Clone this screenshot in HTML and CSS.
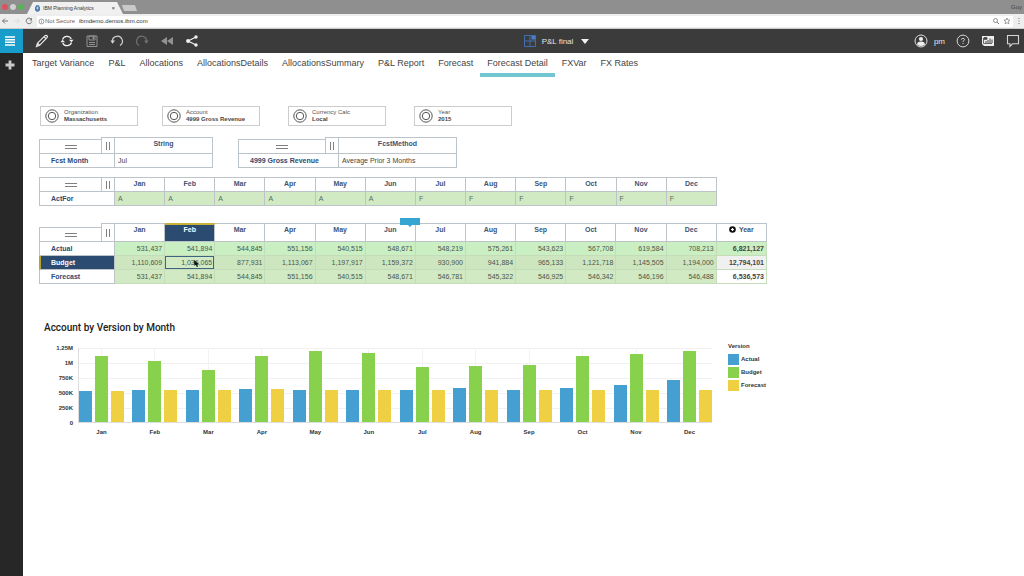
FILE: index.html
```html
<!DOCTYPE html>
<html lang="en">
<head>
<meta charset="utf-8">
<title>IBM Planning Analytics</title>
<link rel="stylesheet" href="styles.css">
</head>
<body>
<header class="browser">
  <div class="tabstrip">
    <span class="light red"></span><span class="light grey"></span><span class="light green"></span>
    <div class="browser-tab">
      <svg class="favicon" viewBox="0 0 6 8"><path d="M1 0h4v2h1v4L4 8H2L0 6V2h1z" fill="#4c7fb0"/><path d="M2 2h2v3H2z" fill="#b9d2e8"/></svg>
      <span>IBM Planning Analytics</span>
      <button class="tab-close" aria-label="Close tab">×</button>
    </div>
    <span class="new-tab"></span>
    <span class="profile">Guy</span>
  </div>
  <div class="address-bar">
    <svg class="nav-icon" viewBox="0 0 8 8"><path d="M7 4H1.500M4 1.500L1.500 4 4 6.500" fill="none" stroke="#777"/></svg>
    <svg class="nav-icon" viewBox="0 0 8 8"><path d="M1 4h5.500M4 1.500L6.500 4 4 6.500" fill="none" stroke="#ddd"/></svg>
    <svg class="nav-icon" viewBox="0 0 8 8"><path d="M6.400 2.400A2.800 2.800 0 1 0 6.800 4.500" fill="none" stroke="#777"/><path d="M7 .8v2.700H4.300z" fill="#777"/></svg>
    <div class="location">
      <svg class="info" viewBox="0 0 8 8"><circle cx="4" cy="4" r="2.800" fill="none" stroke="#777" stroke-width=".8"/><path d="M4 3.600v2M4 2.200v.8" stroke="#777" stroke-width=".8"/></svg>
      <label for="url">Not Secure</label>
      <input id="url" type="text" value="ibmdemo.demos.ibm.com">
      <svg class="nav-icon" viewBox="0 0 8 8"><circle cx="3.500" cy="3.500" r="2" fill="none" stroke="#777" stroke-width=".8"/><path d="M5 5l2 2" stroke="#777"/></svg>
      <svg class="nav-icon" viewBox="0 0 8 8"><path d="M4 1l.9 2 2.100.2-1.600 1.400.5 2.200L4 5.700 2.100 6.800l.5-2.200L1 3.200 3.100 3z" fill="none" stroke="#777" stroke-width=".7"/></svg>
    </div>
    <svg class="more" viewBox="0 0 4 8"><path d="M2 1v1M2 3.500v1M2 6v1" stroke="#777"/></svg>
  </div>
</header>

<div class="toolbar">
  <button class="menu" aria-label="Menu"><svg width="10" height="10" viewBox="0 0 10 10"><path d="M0 1h10M0 3.700h10M0 6.300h10M0 9h10" stroke="#fff" stroke-width="1.600"/></svg></button>
  <div class="tools">
    <button aria-label="Edit"><svg viewBox="0 0 14 14"><path d="M1.500 12.500l1-3.300L10 1.700q1.200-.8 2 0 .8.900 0 2L4.600 11.300zM2.500 9.200l2.100 2.100M9 2.700l2.200 2.200" fill="none" stroke="#f2f2f2" stroke-width="1.200"/></svg></button>
    <button aria-label="Refresh"><svg viewBox="0 0 14 14"><path d="M2.500 5.500a4.800 4.800 0 0 1 8.800-.6M11.500 8.500a4.800 4.800 0 0 1-8.800.6" fill="none" stroke="#f2f2f2" stroke-width="1.300"/><path d="M8.800 5.800h4.700L11.600 8.300zM5.200 8.200H.5L2.400 5.700z" fill="#f2f2f2"/></svg></button>
    <button aria-label="Save"><svg viewBox="0 0 14 14"><path d="M2 2h10v10.500H2z" fill="none" stroke="#929292"/><path d="M4 2h6v4H4zM4 8.500h6M4 10.500h6" fill="none" stroke="#929292"/><path d="M7.500 2.500H9v2.700H7.500z" fill="#929292"/></svg></button>
    <button aria-label="Undo"><svg viewBox="0 0 14 14"><path d="M2.400 7.500A5 5 0 1 1 10 11.500" fill="none" stroke="#d0d0d0" stroke-width="1.200"/><path d="M.4 6.500h4.700L2.500 9.800z" fill="#d0d0d0"/></svg></button>
    <button aria-label="Redo"><svg viewBox="0 0 14 14"><path d="M11.600 7.500A5 5 0 1 0 4 11.500" fill="none" stroke="#707070" stroke-width="1.200"/><path d="M13.600 6.500H8.900l2.600 3.300z" fill="#707070"/></svg></button>
    <button aria-label="Rewind"><svg viewBox="0 0 14 14"><path d="M7 3v8L1 7zM13 3v8L7 7z" fill="#929292"/></svg></button>
    <button aria-label="Share"><svg viewBox="0 0 14 14"><path d="M11 3L3 7l8 4" fill="none" stroke="#f2f2f2" stroke-width="1.200"/><circle cx="11" cy="3" r="1.700" fill="#f2f2f2"/><circle cx="3" cy="7" r="1.900" fill="#f2f2f2"/><circle cx="11" cy="11" r="1.700" fill="#f2f2f2"/></svg></button>
  </div>
  <button class="book">
    <svg width="12" height="12" viewBox="0 0 12 12"><path d="M.5.5h11v11H.5zM6 .5v11M.5 6h11" fill="none" stroke="#416fae"/><path d="M7.500 1h3.500v3.500H7.500z" fill="#4b80c4"/></svg>
    <span>P&amp;L final</span>
    <svg width="8" height="5" viewBox="0 0 8 5"><path d="M0 0h8L4 5z" fill="#f2f2f2"/></svg>
  </button>
  <div class="account">
    <button class="user"><svg viewBox="0 0 14 14"><circle cx="7" cy="7" r="6" fill="none" stroke="#ddd"/><circle cx="7" cy="5" r="2.100" fill="#eee"/><path d="M3 10.500Q3.200 7.500 7 7.500t4 3Q9 12 7 12t-4-1.500z" fill="#eee"/></svg><span>pm</span></button>
    <button aria-label="Help"><svg viewBox="0 0 14 14"><circle cx="7" cy="7" r="5.900" fill="none" stroke="#d6d6d6"/><path d="M5.400 5.700Q5.500 4.300 7 4.300q1.600.1 1.500 1.400Q8.400 6.500 7 7.300v.7M7 9v1" fill="none" stroke="#d6d6d6" stroke-width=".9"/></svg></button>
    <button aria-label="Reports"><svg viewBox="0 0 14 14"><path d="M1 2h12v10H3L1 10z" fill="#ededed"/><path d="M2.500 4v5.500h8.500" fill="none" stroke="#444" stroke-width=".8"/><path d="M3 3.700h3v1.500H3zM5 9V7M7 9V6M9 9V4.500M11 9V5.500" fill="#444" stroke="#444"/></svg></button>
    <button aria-label="Comments"><svg viewBox="0 0 14 14"><path d="M1.500 1.500h11v8.300H6.500L4 12.300V9.800H1.500z" fill="none" stroke="#d6d6d6" stroke-width="1.100"/></svg></button>
  </div>
</div>

<div class="workspace">
  <aside class="sidebar"><button aria-label="Add"><svg width="10" height="10" viewBox="0 0 10 10"><path d="M5 .5v9M.5 5h9" stroke="#c9c9c9" stroke-width="2.800"/></svg></button></aside>
  <main>
    <nav class="sheets">
      <a href="#">Target Variance</a><a href="#">P&amp;L</a><a href="#">Allocations</a><a href="#">AllocationsDetails</a><a href="#">AllocationsSummary</a><a href="#">P&amp;L Report</a><a href="#">Forecast</a><a href="#" class="current">Forecast Detail</a><a href="#">FXVar</a><a href="#">FX Rates</a>
    </nav>

    <div class="selectors">
      <button><svg viewBox="0 0 14 14"><circle cx="7" cy="7" r="6.200"/><circle cx="7" cy="7" r="3.700"/></svg><span>Organization<b>Massachusetts</b></span></button>
      <button><svg viewBox="0 0 14 14"><circle cx="7" cy="7" r="6.200"/><circle cx="7" cy="7" r="3.700"/></svg><span>Account<b>4999 Gross Revenue</b></span></button>
      <button><svg viewBox="0 0 14 14"><circle cx="7" cy="7" r="6.200"/><circle cx="7" cy="7" r="3.700"/></svg><span>Currency Calc<b>Local</b></span></button>
      <button><svg viewBox="0 0 14 14"><circle cx="7" cy="7" r="6.200"/><circle cx="7" cy="7" r="3.700"/></svg><span>Year<b>2015</b></span></button>
    </div>

    <div class="inputs">
      <table class="grid month-input">
        <tr class="tall"><td class="corner"><div><i class="rows"></i><i class="cols"></i></div></td><th>String</th></tr>
        <tr><th class="row">Fcst Month</th><td>Jul</td></tr>
      </table>
      <table class="grid method-input">
        <tr class="tall"><td class="corner"><div><i class="rows"></i><i class="cols"></i></div></td><th>FcstMethod</th></tr>
        <tr><th class="row">4999 Gross Revenue</th><td>Average Prior 3 Months</td></tr>
      </table>
    </div>

    <table class="grid flags">
      <tr><td class="corner"><div><i class="rows"></i><i class="cols"></i></div></td><th>Jan</th><th>Feb</th><th>Mar</th><th>Apr</th><th>May</th><th>Jun</th><th>Jul</th><th>Aug</th><th>Sep</th><th>Oct</th><th>Nov</th><th>Dec</th></tr>
      <tr><th class="row">ActFor</th><td>A</td><td>A</td><td>A</td><td>A</td><td>A</td><td>A</td><td>F</td><td>F</td><td>F</td><td>F</td><td>F</td><td>F</td></tr>
    </table>

    <div class="forecast">
      <table class="grid values">
        <tr class="head"><td class="corner"><div><i class="rows"></i><i class="cols"></i></div></td><th>Jan</th><th class="selected">Feb</th><th>Mar</th><th>Apr</th><th>May</th><th>Jun</th><th>Jul</th><th>Aug</th><th>Sep</th><th>Oct</th><th>Nov</th><th>Dec</th><th><svg class="expand" viewBox="0 0 7 7"><circle cx="3.500" cy="3.500" r="3.300" fill="#111"/><path d="M3.500 2v3M2 3.500h3" stroke="#fff" stroke-width="1.200"/></svg>Year</th></tr>
        <tr class="actual"><th class="row">Actual</th><td>531,437</td><td>541,894</td><td>544,845</td><td>551,156</td><td>540,515</td><td>548,671</td><td>548,219</td><td>575,261</td><td>543,623</td><td>567,708</td><td>619,584</td><td>708,213</td><td class="total">6,821,127</td></tr>
        <tr class="budget"><th class="row selected">Budget</th><td>1,110,609</td><td class="active">1,036,065<svg class="pointer" viewBox="0 0 5 7"><path d="M0 0l5 4.300H3.200L4 6.500l-1.200.4-.9-2.200L.4 5.800z" fill="#111"/></svg></td><td>877,931</td><td>1,113,067</td><td>1,197,917</td><td>1,159,372</td><td>930,900</td><td>941,884</td><td>965,133</td><td>1,121,718</td><td>1,145,505</td><td>1,194,000</td><td class="total">12,794,101</td></tr>
        <tr class="projection"><th class="row">Forecast</th><td>531,437</td><td>541,894</td><td>544,845</td><td>551,156</td><td>540,515</td><td>548,671</td><td>546,781</td><td>545,322</td><td>546,925</td><td>546,342</td><td>546,196</td><td>546,488</td><td class="total">6,536,573</td></tr>
      </table>
      <span class="drag-tab"></span>
    </div>

    <section class="chart">
      <h2>Account by Version by Month</h2>
      <div class="chart-body">
        <div class="scale"><span>1.25M</span><span>1M</span><span>750K</span><span>500K</span><span>250K</span><span>0</span></div>
        <div class="plot">
          <div class="bars">
            <div><i style="height:42.5%"></i><i style="height:88.8%"></i><i style="height:42.5%"></i></div>
            <div><i style="height:43.4%"></i><i style="height:82.9%"></i><i style="height:43.4%"></i></div>
            <div><i style="height:43.6%"></i><i style="height:70.2%"></i><i style="height:43.6%"></i></div>
            <div><i style="height:44.1%"></i><i style="height:89.0%"></i><i style="height:44.1%"></i></div>
            <div><i style="height:43.2%"></i><i style="height:95.8%"></i><i style="height:43.2%"></i></div>
            <div><i style="height:43.9%"></i><i style="height:92.7%"></i><i style="height:43.9%"></i></div>
            <div><i style="height:43.9%"></i><i style="height:74.5%"></i><i style="height:43.7%"></i></div>
            <div><i style="height:46.0%"></i><i style="height:75.4%"></i><i style="height:43.6%"></i></div>
            <div><i style="height:43.5%"></i><i style="height:77.2%"></i><i style="height:43.8%"></i></div>
            <div><i style="height:45.4%"></i><i style="height:89.7%"></i><i style="height:43.7%"></i></div>
            <div><i style="height:49.6%"></i><i style="height:91.6%"></i><i style="height:43.7%"></i></div>
            <div><i style="height:56.7%"></i><i style="height:95.5%"></i><i style="height:43.7%"></i></div>
          </div>
          <div class="months"><span>Jan</span><span>Feb</span><span>Mar</span><span>Apr</span><span>May</span><span>Jun</span><span>Jul</span><span>Aug</span><span>Sep</span><span>Oct</span><span>Nov</span><span>Dec</span></div>
        </div>
        <div class="legend"><b>Version</b><span class="blue">Actual</span><span class="lime">Budget</span><span class="yellow">Forecast</span></div>
      </div>
    </section>
  </main>
</div>
</body>
</html>
```

FILE: styles.css
```css
* { box-sizing: border-box; }
body {
  margin: 0;
  min-height: 100vh;
  display: flex;
  flex-direction: column;
  background: #fff;
  color: #444;
  font-family: "Liberation Sans", Arial, sans-serif;
  font-size: 7px;
}
button, input { font: inherit; color: inherit; border: 0; padding: 0; background: none; }
button { display: flex; align-items: center; }
svg { display: block; flex: none; }

/* browser frame */
.tabstrip { display: flex; align-items: flex-end; height: 14px; background: #8f8f8f; padding-right: 2px; }
.light { width: 6px; height: 6px; border-radius: 50%; margin: 0 0 4px 2px; }
.red { background: #d9545f; }
.grey { background: #d0d0d0; }
.green { background: #55b556; }
.browser-tab {
  display: flex; align-items: center; gap: 3px;
  width: 96px; height: 12px; margin-left: 3px; padding: 0 8px;
  background: #f0f0f0; clip-path: polygon(6px 0, 90px 0, 96px 100%, 0 100%);
  font-size: 5px; color: #333;
}
.favicon { width: 5px; height: 7px; }
.tab-close { margin-left: auto; font-size: 6px; }
.new-tab { width: 13px; height: 6px; margin-bottom: 3px; background: #c9c9c9; transform: skewX(20deg); }
.profile { margin: 0 0 4px auto; font-size: 6px; color: #444; }
.address-bar {
  display: flex; align-items: center; gap: 4px;
  height: 15px; padding: 0 3px 0 1px; background: #eee; border-bottom: 1px solid #ccc;
}
.nav-icon { width: 8px; height: 8px; }
.info { width: 7px; height: 7px; }
.location {
  display: flex; align-items: center; flex: 1; height: 11px; padding: 0 2px 0 1px;
  background: #fff; font-size: 6px; color: #666;
}
.location input { flex: 1; margin-left: 4px; color: #333; }
.location .nav-icon + .nav-icon { margin-left: 3px; }
.more { width: 4px; height: 8px; }

/* application toolbar */
.toolbar {
  display: grid; grid-template-columns: 23px 1fr auto 1fr; align-items: center;
  height: 24px; background: #3b3b3b; color: #e4e4e4; font-size: 8px;
}
.menu { height: 24px; justify-content: center; padding-right: 3px; background: #189dcb; }
.tools, .account { display: flex; align-items: center; }
.tools { gap: 11px; padding-left: 12px; }
.tools svg, .account svg { width: 14px; height: 14px; }
.book { gap: 6px; margin-left: 66px; }
.book svg + span { margin-right: 2px; }
.account { justify-content: flex-end; gap: 11px; padding-right: 4px; }
.user { gap: 6px; }

.workspace { flex: 1; display: flex; }
.sidebar { width: 23px; background: #272727; }
.sidebar button { width: 100%; justify-content: center; padding: 7px 3px 0 0; }
main { flex: 1; padding: 0 16px; }

.sheets { display: flex; height: 24px; margin-left: -14px; font-size: 9px; }
.sheets a { padding: 0 7px; line-height: 21px; color: #444; text-decoration: none; white-space: nowrap; }
.sheets .current { border-bottom: 4px solid #72c6d2; }

/* context selectors */
.selectors { display: grid; grid-template-columns: 122px 126px 126px 98px; margin: 29px 0 0 1px; }
.selectors button {
  width: 98px; height: 20px; gap: 5px; padding-left: 4px; border: 1px solid #ccc;
  text-align: left; font-size: 6px; line-height: 7px; color: #555;
}
.selectors svg { width: 14px; height: 14px; fill: none; stroke: #555; }
.selectors b { display: block; color: #444; }

/* data grids */
.grid { border-collapse: separate; border-spacing: 0; table-layout: fixed; font-size: 7px; line-height: 13px; }
.grid th, .grid td { height: 14px; padding: 0 3px; border-right: 1px solid #bcc3c9; border-bottom: 1px solid #bcc3c9; white-space: nowrap; }
.grid th { color: #3e5474; vertical-align: top; }
.grid tr:first-child th { border-top: 1px solid #bcc3c9; line-height: 12px; }
.grid .row { padding-left: 11px; border-left: 1px solid #bcc3c9; text-align: left; color: #2c4a73; }
.grid .corner { width: 76px; padding: 0; border: 0; vertical-align: bottom; }
.corner div { display: flex; align-items: flex-end; }
.rows, .cols { display: flex; align-items: center; justify-content: center; border: 1px solid #bcc3c9; height: 15px; }
.rows { flex: 1; border-right: 0; }
.cols { width: 14px; }
.rows::before { content: ""; width: 12px; height: 2px; border: solid #808080; border-width: 1px 0; }
.cols::before { content: ""; width: 2px; height: 8px; border: solid #808080; border-width: 0 1px; }
.inputs { display: flex; gap: 25px; margin-top: 11px; }
.month-input { width: 174px; }
.method-input { width: 219px; }
.grid.method-input .corner { width: 101px; }
.tall th { height: 17px; }
.tall .cols { height: 17px; }
.flags { width: 678px; margin-top: 9px; }
.flags td:not(.corner) { background: #d1eac3; color: #5b6b58; }
.forecast { position: relative; width: 728px; margin-top: 17px; }
.values { width: 728px; }
.head th { height: 19px; }
.head .cols { height: 19px; }
.values .head th.selected { background: #2b4b70; color: #fff; border-top: 2px solid #c9b13a; line-height: 10px; }
.values td:not(.corner) { text-align: right; background: #d1eac3; color: #4c554c; border-color: #c5dcba; padding-right: 2px; }
.values .actual td:not(.corner) { background: #caefc2; }
.values .budget td:not(.corner) { background: #cde6bf; }
.values .row.selected { background: #2b4b70; color: #fff; border-left: 2px solid #b4a42d; padding-left: 10px; }
.values .budget td.active:not(.corner) { position: relative; background: #d1eac3; box-shadow: inset 0 0 0 1px #3f6480; }
.values td.total:not(.corner) { font-weight: bold; color: #444; }
.values .budget td.total:not(.corner) { background: #f0f0f0; }
.values .projection td.total:not(.corner) { background: #fff; }
.expand { display: inline-block; width: 7px; height: 7px; margin-right: 3px; vertical-align: -1px; }
.pointer { position: absolute; left: 29px; top: 4px; width: 5px; height: 7px; }
.drag-tab { position: absolute; left: 361px; top: -5px; width: 20px; height: 7px; background: #35a5d2; }
.drag-tab::after { content: ""; position: absolute; left: 8px; top: 7px; border: 2px solid transparent; border-top-color: #35a5d2; }

/* chart */
.chart { margin-top: 37px; font-size: 6px; font-weight: bold; color: #333; }
.chart h2 { margin: 0 0 0 5px; font: 500 10px/13px Roboto, sans-serif; color: #222; }
.chart-body { display: flex; margin-top: 7px; }
.scale { display: flex; flex-direction: column; width: 34px; text-align: right; line-height: 15px; }
.plot { width: 634px; margin: 7px 0 0 5px; }
.bars {
  display: flex; justify-content: space-between; height: 75px;
  border-left: 1px solid #ddd; border-bottom: 1px solid #ddd;
  background: repeating-linear-gradient(#f1f1f1 0 1px, transparent 1px 15px);
}
.bars div, .months span { width: 45px; }
.bars div { display: flex; align-items: flex-end; justify-content: space-between; background: linear-gradient(#f3f3f3, #f3f3f3) center / 1px 100% no-repeat; }
.bars i { width: 13px; background: #459fd0; }
.bars i:nth-child(2) { background: #88d14c; }
.bars i:nth-child(3) { background: #f0d043; }
.months { display: flex; justify-content: space-between; padding: 5px 0 0 1px; text-align: center; line-height: 8px; }
.legend { display: flex; flex-direction: column; gap: 2px; margin-left: 16px; line-height: 11px; }
.legend span { display: flex; gap: 2px; }
.legend span::before { content: ""; width: 11px; height: 11px; background: #459fd0; }
.legend .lime::before { background: #88d14c; }
.legend .yellow::before { background: #f0d043; }
```
